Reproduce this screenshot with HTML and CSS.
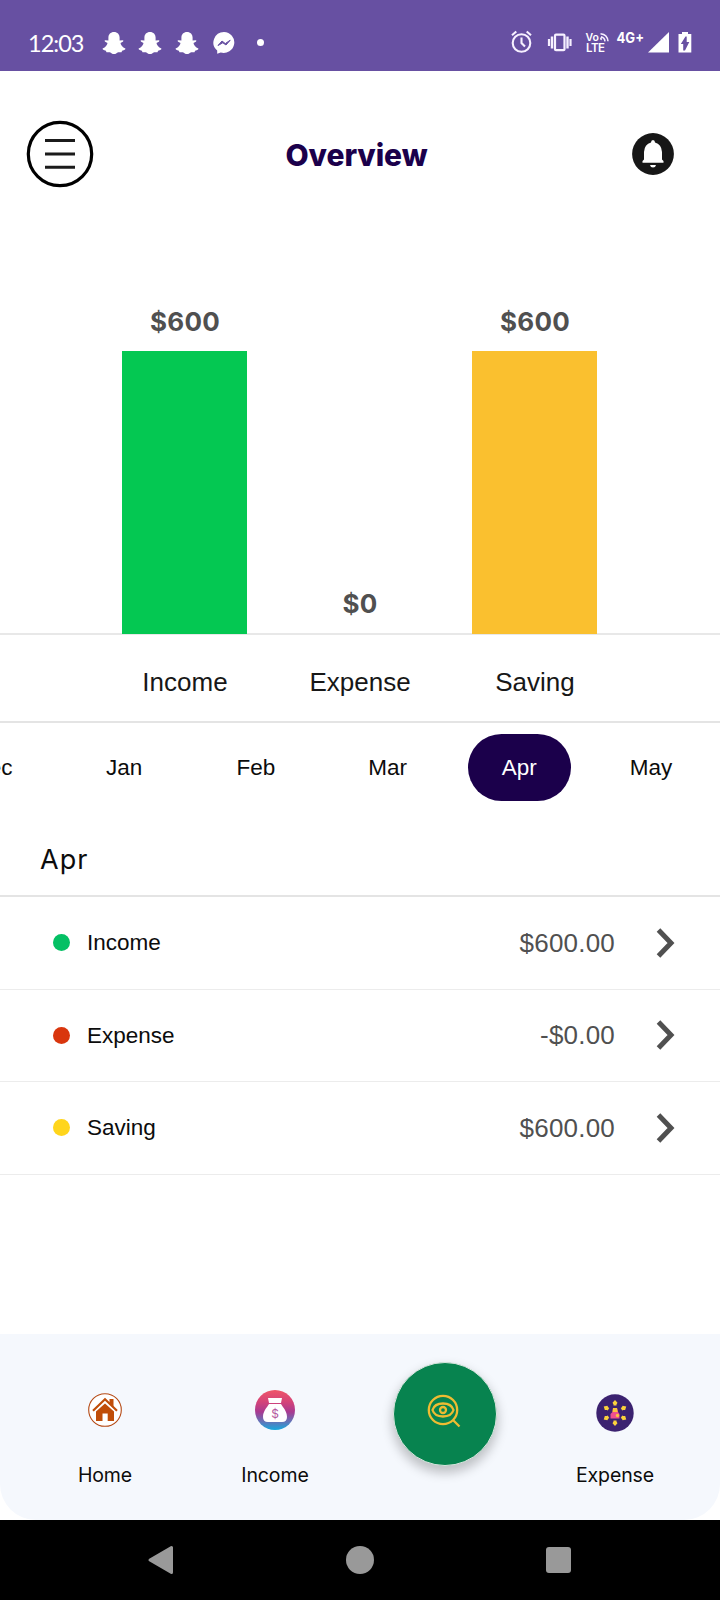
FILE: index.html
```html
<!DOCTYPE html>
<html lang="en">
<head>
<meta charset="utf-8">
<title>Overview</title>
<link rel="stylesheet" href="styles.css">
</head>
<body>
<svg class="defs" width="0" height="0">
  <defs>
    <symbol id="ghost" viewBox="0 0 24 24"><path d="M12 1C8.6 1 6.4 3.400 6.400 6.600V9.600L3.200 9.200C2.300 9.400 2.500 10.300 3.200 10.700L5.500 12C5.300 14 3.500 16.300.6 17.600C.4 18.800 1.600 19.300 3.900 19.700L4.500 21.200L7.800 21.200C9.300 22 10.300 23 12 23S14.700 22 16.200 21.200L19.500 21.200L20.100 19.700C22.400 19.300 23.600 18.800 23.400 17.600C20.500 16.300 18.700 14 18.500 12L20.800 10.700C21.500 10.300 21.700 9.400 20.800 9.200L17.600 9.600V6.600C17.600 3.400 15.400 1 12 1Z" fill="#fff"/></symbol>
    <symbol id="chevron" viewBox="0 0 20 30"><path d="M3.500 2L16 15L3.500 28" fill="none" stroke="#505050" stroke-width="5"/></symbol>
  </defs>
</svg>
<div class="status">
  <span class="time">12:03</span>
  <svg class="ghost" width="24" height="24"><use href="#ghost"/></svg>
  <svg class="ghost" width="24" height="24"><use href="#ghost"/></svg>
  <svg class="ghost" width="24" height="24"><use href="#ghost"/></svg>
  <svg class="messenger" width="22" height="22" viewBox="0 0 22 22"><path d="M11 0A10.700 10.500 0 1 1 7.700 20.600L4.200 21.800V18.500A10.700 10.500 0 0 1 11 0Z" fill="#fff"/><path d="M5 13.500L9 9L12.300 11.600L17.200 8.200L13 13L9.800 10.800Z" fill="#6750a2" stroke="#6750a2" stroke-width="1"/></svg>
  <i class="more-dot"></i>
  <svg class="right-icons" width="182" height="26" viewBox="0 0 182 26" fill="none" stroke="#f6f0ff">
    <circle cx="10.500" cy="13" r="8.800" stroke-width="2.100"/><path d="M10.500 7.500V13L14 16.500M1 5.300L5.300 1.500M20 5.300L15.700 1.500" stroke-width="2.100"/>
    <rect x="44" y="4.700" width="9.500" height="15.500" rx="1" stroke-width="2.200"/><path d="M41 6.500V18.500M56.500 6.500V18.500" stroke-width="2.400"/><path d="M38 9V16M59.500 9V16" stroke-width="2.200"/>
    <path d="M90 10Q90.500 8.700 89.500 7.600M90 6.800Q93.500 7.500 94 11.300M89.500 3.700Q96.500 4.500 97 11.300" stroke-width="1.600"/>
    <g class="status-text"><text class="light" x="74.500" y="11" font-size="10.500" textLength="13.500">Vo</text><text class="light" x="75" y="22.300" font-size="11.500" textLength="19">LTE</text><text x="105.500" y="12.700" font-size="14.500" textLength="27.500" lengthAdjust="spacingAndGlyphs">4G+</text></g>
    <path d="M158 2V22.500H137Z" fill="#fff" stroke="none"/>
    <path d="M167.500 4H171V2H177V4H180.300V22.500H167.500Z" fill="#fff" stroke="none"/><path d="M174.500 6.500L169.800 14H172.200V20.500H174L178.300 12H175.700V6.500Z" fill="#6750a2" stroke="none"/>
  </svg>
</div>
<header class="header">
  <svg width="68" height="68" viewBox="0 0 68 68"><circle cx="34" cy="34" r="31.700" fill="none" stroke="#000" stroke-width="3.200"/><path d="M19 20.500H49M19 34H49M19 47.300H49" stroke="#1b1b1b" stroke-width="3"/></svg>
  <h1 class="title">Overview</h1>
  <svg width="42" height="42" viewBox="0 0 42 42"><circle cx="21" cy="21" r="20.900" fill="#171717"/><path d="M19 9.500Q19 7 21 7T23 9.500Q29.500 11 30 19V26.500L31.500 28V29.700H10.500V28L12 26.500V19Q12.500 11 19 9.500ZM18 32H24Q23.500 34.500 21 34.500T18 32Z" fill="#fff"/></svg>
</header>
<section class="chart">
  <div class="col"><span class="value">$600</span><div class="bar green"></div></div>
  <div class="col"><span class="value">$0</span></div>
  <div class="col"><span class="value">$600</span><div class="bar amber"></div></div>
</section>
<div class="chart-labels"><span>Income</span><span>Expense</span><span>Saving</span></div>
<nav class="months"><span>Dec</span><span>Jan</span><span>Feb</span><span>Mar</span><span class="active">Apr</span><span>May</span></nav>
<h2 class="month-title">Apr</h2>
<ul class="rows">
  <li class="row"><i class="dot income"></i><span class="name">Income</span><span class="amount">$600.00</span><svg width="20" height="30"><use href="#chevron"/></svg></li>
  <li class="row"><i class="dot expense"></i><span class="name">Expense</span><span class="amount">-$0.00</span><svg width="20" height="30"><use href="#chevron"/></svg></li>
  <li class="row"><i class="dot saving"></i><span class="name">Saving</span><span class="amount">$600.00</span><svg width="20" height="30"><use href="#chevron"/></svg></li>
</ul>
<nav class="tabs">
  <div class="tab"><div class="tab-icon">
    <svg width="34" height="34" viewBox="0 0 34 34"><circle cx="17" cy="17" r="16.300" fill="#fff" stroke="#b54a15" stroke-width="1.100"/><path d="M21.500 6H25.500V14L21.500 10ZM17 10.500L26 18.500V28H19.700V20.500H14.500V28H8V18.500Z" fill="#c04d08"/><path d="M5 17.700L17 6.300L29 17.700" fill="none" stroke="#c04d08" stroke-width="2.200"/></svg>
  </div><span>Home</span></div>
  <div class="tab"><div class="tab-icon">
    <svg width="40" height="40" viewBox="0 0 40 40"><defs><linearGradient id="sunset" x1="0" y1="0" x2="0" y2="1"><stop offset="0" stop-color="#ef5568"/><stop offset=".3" stop-color="#d44379"/><stop offset=".55" stop-color="#a83a91"/><stop offset=".78" stop-color="#6672b7"/><stop offset="1" stop-color="#16a9dd"/></linearGradient></defs><circle cx="20" cy="20" r="20" fill="url(#sunset)"/><path d="M13 8H27L26 13H14ZM14 14H26C28 17.500 32 21 32 27Q32 32 27 32H13Q8 32 8 27C8 21 12 17.500 14 14Z" fill="#fff"/><text class="dollar" x="20" y="27.500" text-anchor="middle">$</text></svg>
  </div><span>Income</span></div>
  <div class="tab"><div class="fab"><svg width="34" height="34" viewBox="0 0 34 34" fill="none" stroke="#eebc32" stroke-width="2.300"><circle cx="16" cy="16" r="14.200"/><path d="M5.500 16Q7.500 9.500 16 9.500T26.500 16Q24.500 22.500 16 22.500T5.500 16ZM26 26L32.500 32.500"/><circle cx="16" cy="16" r="3"/></svg></div></div>
  <div class="tab"><div class="tab-icon low">
    <svg width="38" height="38" viewBox="0 0 38 38"><defs><path id="arrow" d="M19 6L21.500 8.700L20.500 10.500V11.500H17.500V10.500L16.500 8.700Z"/></defs><circle cx="19" cy="19" r="18.700" fill="#3b2270"/><g fill="#fbd23c"><use href="#arrow"/><use href="#arrow" transform="rotate(60 19 19)"/><use href="#arrow" transform="rotate(120 19 19)"/><use href="#arrow" transform="rotate(180 19 19)"/><use href="#arrow" transform="rotate(240 19 19)"/><use href="#arrow" transform="rotate(300 19 19)"/></g><path d="M17 14H21L22 18L23.500 20V24.500H14.500V20L16.500 18Z" fill="#f0508f"/><path d="M17 14H21L21.700 18H16.500Z" fill="#fbc63c"/><circle cx="21.500" cy="21.500" r="1.700" fill="#fbc63c"/></svg>
  </div><span>Expense</span></div>
</nav>
<footer class="system">
  <svg width="28" height="30" viewBox="0 0 28 30"><path d="M3 15L24.500 2.500V27.500Z" fill="#999" stroke="#999" stroke-width="3" stroke-linejoin="round"/></svg>
  <i class="home-key"></i><i class="recent-key"></i>
</footer>
</body>
</html>
```
FILE: styles.css
```css
* { box-sizing: border-box; }
body { margin: 0; width: 720px; height: 1600px; overflow: hidden; background: #fff; color: #0c0c0c; font-family: "Liberation Sans", Arial, sans-serif; display: flex; flex-direction: column; }
.defs { position: absolute; }
svg { display: block; flex: none; }
.status { height: 71px; flex: none; background: #6750a2; display: flex; align-items: center; padding: 14px 27px 0 28px; }
.time { width: 73.500px; color: #fff; font: 23.500px/28px Lato, sans-serif; letter-spacing: -1px; }
.ghost { margin-right: 12.700px; }
.messenger { margin-left: 1px; }
.more-dot { width: 7px; height: 7px; margin-left: 22px; border-radius: 50%; background: #fff; }
.right-icons { margin-left: auto; }
.status-text { fill: #fff; stroke: none; font-family: Inter, sans-serif; font-weight: 700; }
.light { font-weight: 600; }
.header { height: 166px; flex: none; display: flex; align-items: center; justify-content: space-between; padding: 0 46px 0 26px; }
.title { margin: 2px 0 0 -13px; color: #1b004b; font: 800 30px/40px Inter, sans-serif; letter-spacing: -0.100px; }
.chart { height: 398px; flex: none; border-bottom: 2px solid #e8e8e8; padding: 0 97.500px; display: grid; grid-template-columns: repeat(3, 175px); }
.col { display: flex; flex-direction: column; align-items: center; justify-content: flex-end; }
.value { color: #505050; font: 700 26px/34px Inter, sans-serif; letter-spacing: 0.300px; margin-bottom: 12px; }
.bar { width: 125px; height: 283px; margin-bottom: -1px; margin-right: 1px; flex: none; }
.green { background: #04c852; }
.amber { background: #fac02f; }
.chart-labels { height: 88px; flex: none; padding: 9px 97.500px 0; border-bottom: 2px solid #e4e4e4; display: grid; grid-template-columns: repeat(3, 175px); align-items: center; text-align: center; font-size: 26px; color: #171717; }
.months { width: 779px; height: 90px; flex: none; display: flex; align-items: center; margin-left: -59px; padding-bottom: 1px; font-size: 22.500px; }
.months span { width: 103px; height: 67px; margin-right: 28.700px; flex: none; line-height: 67px; text-align: center; border-radius: 34px; }
.months .active { background: #1b004b; color: #fff; }
.month-title { margin: 0; height: 84px; flex: none; padding: 13px 40px 0; border-bottom: 2px solid #e4e4e4; font: 400 27px/68px Inter, sans-serif; letter-spacing: 1px; }
.rows { list-style: none; margin: 0; padding: 0; flex: none; }
.row { height: 92.600px; border-bottom: 1.500px solid #ececec; display: flex; align-items: center; padding: 0 45px 0 53px; }
.dot { width: 17px; height: 17px; border-radius: 50%; margin-right: 17px; }
.income { background: #04c064; }
.expense { background: #d9360d; }
.saving { background: #ffd51c; }
.name { font-size: 22.500px; padding-top: 1px; }
.amount { margin-left: auto; margin-right: 40px; padding-top: 1px; color: #505050; font-size: 26px; letter-spacing: 0.200px; }
.tabs { height: 186px; flex: none; margin-top: auto; padding: 0 20px; background: #f5f8fd; border-radius: 0 0 36px 36px; display: grid; grid-template-columns: repeat(4, 170px); text-align: center; font: 19.500px/26px Inter, sans-serif; }
.tab { padding-top: 56px; }
.tab span { letter-spacing: -0.100px; }
.tab-icon { height: 40px; display: flex; align-items: center; justify-content: center; margin-bottom: 32px; }
.low svg { margin-top: 6px; }
.fab { width: 104px; height: 104px; margin: -28px auto 0; border-radius: 50%; background: #07834f; border: 1px solid #d9e7df; box-shadow: 0 6px 11px 1px #0000003a; display: flex; align-items: center; justify-content: center; padding: 0 2px 7px 0; }
.dollar { fill: #b458a0; font: 12px Inter, sans-serif; }
.system { height: 80px; flex: none; background: #000; display: flex; align-items: center; justify-content: space-between; padding: 0 149px 0 147px; }
.home-key { width: 28px; height: 28px; margin-left: -2px; border-radius: 50%; background: #999; }
.recent-key { width: 25px; height: 26px; border-radius: 3px; background: #999; }
```
